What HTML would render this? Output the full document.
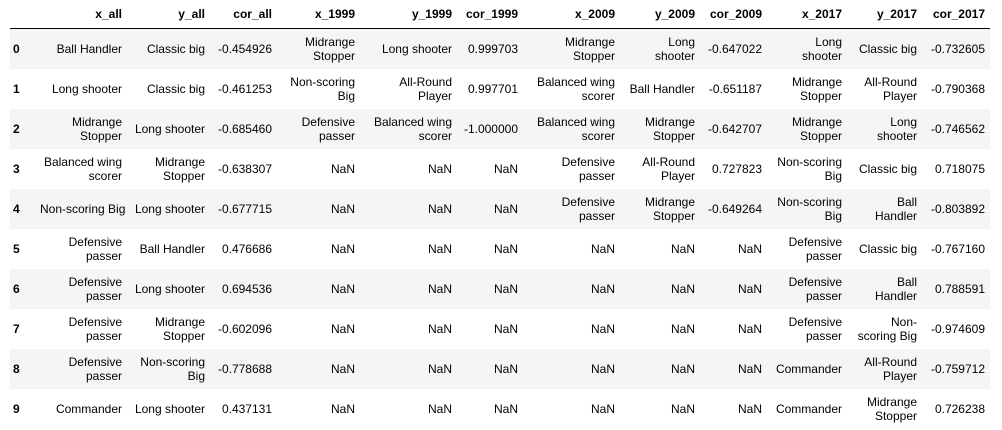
<!DOCTYPE html>
<html><head><meta charset="utf-8"><style>
body{margin:0;background:#fff;font-family:"Liberation Sans",Arial,sans-serif;font-size:12px;color:#000;}
table{position:absolute;left:10px;top:0;border-collapse:collapse;table-layout:fixed;width:980px;}
th,td{text-align:right;padding:0 5px;white-space:nowrap;line-height:14px;vertical-align:middle;}
thead th{height:28px;border-bottom:1px solid #000;font-weight:bold;}
tbody td,tbody th{height:40px;}
tbody th{text-align:left;font-weight:bold;padding-left:3px;}
tbody tr:nth-child(odd){background:#f5f5f5;}
</style></head><body>
<table>
<colgroup><col style="width:25px"><col style="width:92px"><col style="width:83px"><col style="width:67px"><col style="width:83px"><col style="width:97px"><col style="width:66px"><col style="width:97px"><col style="width:80px"><col style="width:67px"><col style="width:80px"><col style="width:75px"><col style="width:68px"></colgroup>
<thead><tr><th></th><th>x_all</th><th>y_all</th><th>cor_all</th><th>x_1999</th><th>y_1999</th><th>cor_1999</th><th>x_2009</th><th>y_2009</th><th>cor_2009</th><th>x_2017</th><th>y_2017</th><th>cor_2017</th></tr></thead>
<tbody>
<tr><th>0</th><td>Ball Handler</td><td>Classic big</td><td>-0.454926</td><td>Midrange<br>Stopper</td><td>Long shooter</td><td>0.999703</td><td>Midrange<br>Stopper</td><td>Long<br>shooter</td><td>-0.647022</td><td>Long<br>shooter</td><td>Classic big</td><td>-0.732605</td></tr>
<tr><th>1</th><td>Long shooter</td><td>Classic big</td><td>-0.461253</td><td>Non-scoring<br>Big</td><td>All-Round<br>Player</td><td>0.997701</td><td>Balanced wing<br>scorer</td><td>Ball Handler</td><td>-0.651187</td><td>Midrange<br>Stopper</td><td>All-Round<br>Player</td><td>-0.790368</td></tr>
<tr><th>2</th><td>Midrange<br>Stopper</td><td>Long shooter</td><td>-0.685460</td><td>Defensive<br>passer</td><td>Balanced wing<br>scorer</td><td>-1.000000</td><td>Balanced wing<br>scorer</td><td>Midrange<br>Stopper</td><td>-0.642707</td><td>Midrange<br>Stopper</td><td>Long<br>shooter</td><td>-0.746562</td></tr>
<tr><th>3</th><td>Balanced wing<br>scorer</td><td>Midrange<br>Stopper</td><td>-0.638307</td><td>NaN</td><td>NaN</td><td>NaN</td><td>Defensive<br>passer</td><td>All-Round<br>Player</td><td>0.727823</td><td>Non-scoring<br>Big</td><td>Classic big</td><td>0.718075</td></tr>
<tr><th>4</th><td>Non-scoring Big</td><td>Long shooter</td><td>-0.677715</td><td>NaN</td><td>NaN</td><td>NaN</td><td>Defensive<br>passer</td><td>Midrange<br>Stopper</td><td>-0.649264</td><td>Non-scoring<br>Big</td><td>Ball<br>Handler</td><td>-0.803892</td></tr>
<tr><th>5</th><td>Defensive<br>passer</td><td>Ball Handler</td><td>0.476686</td><td>NaN</td><td>NaN</td><td>NaN</td><td>NaN</td><td>NaN</td><td>NaN</td><td>Defensive<br>passer</td><td>Classic big</td><td>-0.767160</td></tr>
<tr><th>6</th><td>Defensive<br>passer</td><td>Long shooter</td><td>0.694536</td><td>NaN</td><td>NaN</td><td>NaN</td><td>NaN</td><td>NaN</td><td>NaN</td><td>Defensive<br>passer</td><td>Ball<br>Handler</td><td>0.788591</td></tr>
<tr><th>7</th><td>Defensive<br>passer</td><td>Midrange<br>Stopper</td><td>-0.602096</td><td>NaN</td><td>NaN</td><td>NaN</td><td>NaN</td><td>NaN</td><td>NaN</td><td>Defensive<br>passer</td><td>Non-<br>scoring Big</td><td>-0.974609</td></tr>
<tr><th>8</th><td>Defensive<br>passer</td><td>Non-scoring<br>Big</td><td>-0.778688</td><td>NaN</td><td>NaN</td><td>NaN</td><td>NaN</td><td>NaN</td><td>NaN</td><td>Commander</td><td>All-Round<br>Player</td><td>-0.759712</td></tr>
<tr><th>9</th><td>Commander</td><td>Long shooter</td><td>0.437131</td><td>NaN</td><td>NaN</td><td>NaN</td><td>NaN</td><td>NaN</td><td>NaN</td><td>Commander</td><td>Midrange<br>Stopper</td><td>0.726238</td></tr>
</tbody></table>
</body></html>
